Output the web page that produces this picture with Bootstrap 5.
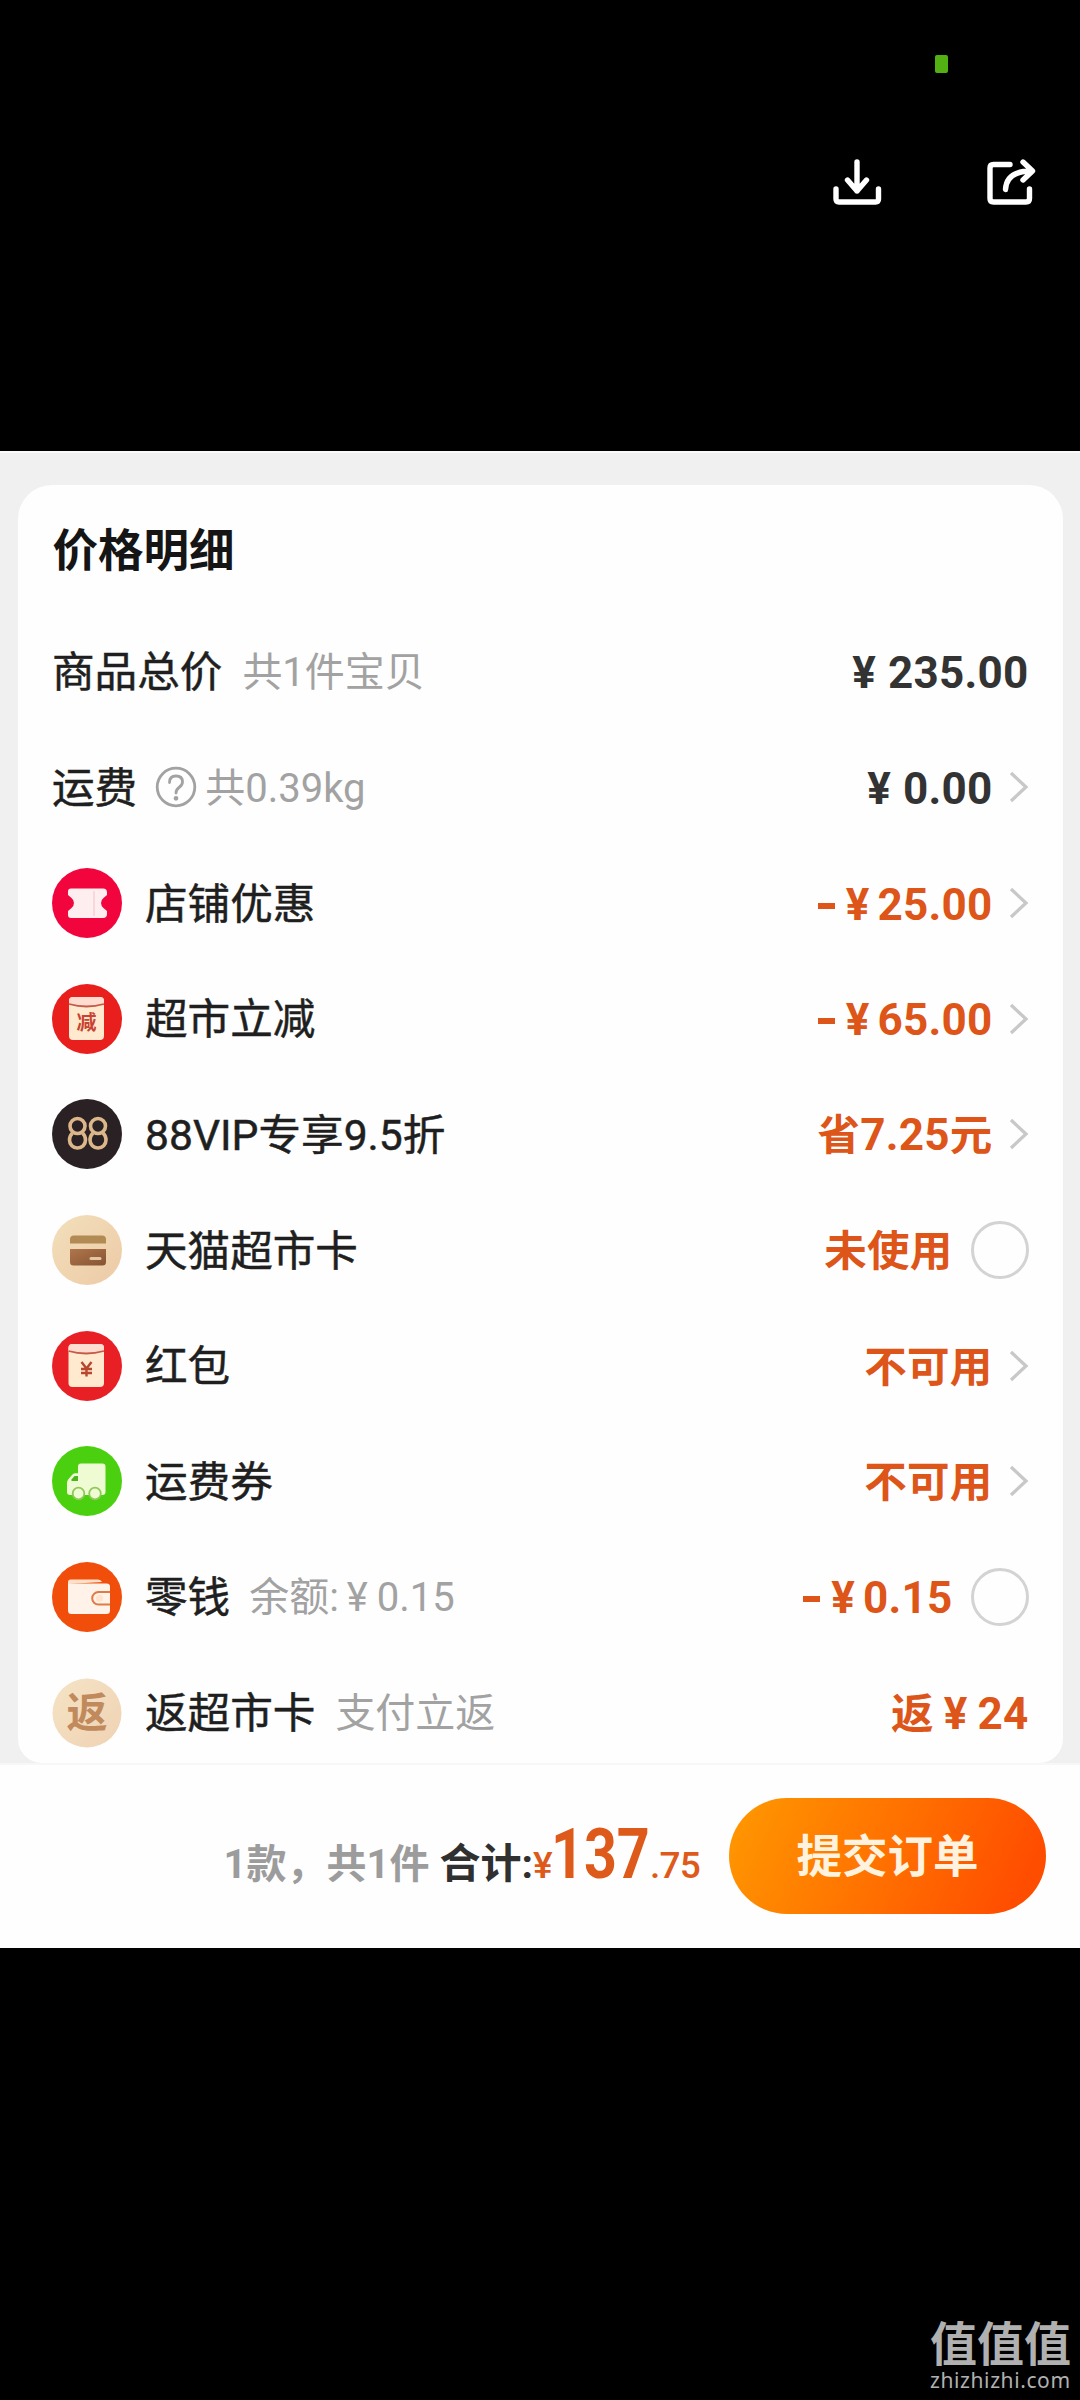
<!DOCTYPE html>
<html lang="zh-CN">
<head>
<meta charset="utf-8">
<meta name="viewport" content="width=device-width, initial-scale=1">
<title>价格明细</title>
<link href="https://cdn.jsdelivr.net/npm/bootstrap@5.3.0/dist/css/bootstrap.min.css" rel="stylesheet">
<style>
html,body{background:#000}
body{width:1080px;height:2400px;overflow:hidden;font-family:Roboto,"Noto Sans CJK SC",sans-serif;color:#1f1f1f}
.topbar{height:451px}
.status-dot{width:13px;height:18px;margin:55px 132px 0 auto;background:#52b012;border-radius:2px}
.tools{margin-top:84px;padding-right:43px;gap:102px}
.panel{height:1497px;background:#f0f0f0;border-top:2px solid #fafafa}
.price-card{margin:32px 17.5px 0;height:1278px;border-radius:34px 34px 24px 24px;background:#fefefe}
.price-title{height:129px;padding:5px 0 0 35px;font-size:45.5px;font-weight:700;color:#151515}
.line{height:115.65px;padding:0 34px 0 34.5px;font-size:42.6px;line-height:60px;white-space:nowrap}
.line svg{flex:none}
.line>span:not(.ring){padding-top:3px}
.line>span.name{padding-top:1px}
.name{-webkit-text-stroke:.5px #1f1f1f}
.ico{width:70px;height:70px;margin-right:23px}
.hint{font-size:40px;color:#a2a2a2}
.val{font-weight:700;font-size:44px;color:#333;letter-spacing:.25px}
.val .cn{font-size:42.5px}
.hot{color:#dd5519}
.yen{margin-right:12px}
.hot .yen{margin-right:8px}
.dash{display:inline-block;width:17px;height:6px;background:#dd5519;vertical-align:11px;margin-right:11px}
.chev{margin-left:16px}
.ring{width:58px;height:58px;border:3px solid #d3d3d3;border-radius:50%;margin-left:18px}
.paybar{height:185px;background:#fefefe;border-top:2px solid #f7f7f7;white-space:nowrap;padding-right:34px}
.sum{font-size:40px;font-weight:700;line-height:80px;color:#9c9c9c;margin-right:29px;margin-top:11px}
.sum .lbl{color:#303030;font-size:41px;margin-left:10px;margin-right:-2px}
.sum .money{color:#dd5a1b;font-weight:500;font-size:37px}
.sum .money .frac{letter-spacing:-.8px}
.sum .money .cur{display:inline-block;width:18px;margin-left:2px;letter-spacing:-3px}
.sum .big{font-size:70px;font-weight:700;display:inline-block;line-height:70px;width:99px}
.sum .big i{display:inline-block;font-style:normal;transform:scaleX(.82);transform-origin:0 50%}
.submit{width:317px;height:116px;margin-top:-2px;background:linear-gradient(115deg,#ff9500 5%,#ff7000 50%,#ff4d00 90%);color:#fff3df;font-size:45.5px;font-weight:700;border:0}
.submit span{display:block;padding-top:5px}
.wm{color:#b0b0b0;right:9px;bottom:8px;width:141px}
.wm .a{font:700 47px/54px "Noto Sans CJK SC",sans-serif;height:54px}
.wm .b{font:400 21px/24px "Noto Sans",sans-serif;letter-spacing:.6px;height:24px}
</style>
</head>
<body class="d-flex flex-column m-0 position-relative">
<header class="topbar">
  <div class="d-flex"><div class="status-dot"></div></div>
  <div class="tools d-flex justify-content-end">
    <svg width="52" height="50" viewBox="831 157 52 50" fill="none" stroke="#fff" stroke-width="5.400" stroke-linecap="round" stroke-linejoin="round"><path d="M857 162v29M847.500 180l9.500 11 9.500-11M836 189v10q0 3 3 3h36.500q3 0 3-3v-10"/></svg>
    <svg width="52" height="50" viewBox="985 157 52 50" fill="none" stroke="#fff" stroke-width="5.400" stroke-linecap="round" stroke-linejoin="round"><path d="M1010 164.500h-16.500q-3.500 0-3.500 3.500v30.500q0 3.500 3.500 3.500h32.500q3.500 0 3.500-3.500v-9.500M1005.500 189.500q1-18.500 26-18.500M1023 162l9.500 9-9.500 9"/></svg>
  </div>
</header>
<main class="panel">
  <section class="price-card overflow-hidden">
    <div class="price-title d-flex align-items-center">价格明细</div>

    <div class="line d-flex align-items-center">
      <span class="name">商品总价</span><span class="hint" style="margin-left:20px">共1件宝贝</span>
      <span class="val ms-auto"><span class="yen">¥</span>235.00</span>
    </div>
    <div class="line d-flex align-items-center">
      <span class="name">运费</span>
      <svg style="margin:0 8px 0 18px" width="42" height="42" viewBox="0 0 42 42" fill="none" stroke="#a2a2a2" stroke-width="2.800" stroke-linecap="round"><circle cx="21" cy="21" r="18.800"/><path d="M14.500 16.500q0-6.500 6.500-6.500t6.500 6q0 3-3.500 5.500-3 2.200-3 5.500"/><circle cx="21" cy="32.300" r="1" fill="#a2a2a2"/></svg>
      <span class="hint">共0.39kg</span>
      <span class="val ms-auto"><span class="yen">¥</span>0.00</span>
      <svg class="chev" width="20" height="32" viewBox="0 0 20 32" fill="none" stroke="#c8c8c8" stroke-width="3.300"><path d="M2 2l15 14-15 14"/></svg>
    </div>
    <div class="line d-flex align-items-center">
      <svg class="ico" viewBox="0 0 70 70"><circle cx="35" cy="35" r="35" fill="#f1053c"/><path d="M19 20.500h32q4 0 4 4v2.500l-3.500 3a6.300 6.300 0 0 0 0 10l3.500 3v3q0 4-4 4H19q-3 0-3-3v-4l3.500-3a6.300 6.300 0 0 0 0-10l-3.500-3v-3.500q0-3 3-3z" fill="#ffeef0"/><path d="M42 23v25" stroke="#f8cfd5" stroke-width="1.500"/></svg>
      <span class="name">店铺优惠</span>
      <span class="val hot ms-auto"><span class="dash"></span><span class="yen">¥</span>25.00</span>
      <svg class="chev" width="20" height="32" viewBox="0 0 20 32" fill="none" stroke="#c8c8c8" stroke-width="3.300"><path d="M2 2l15 14-15 14"/></svg>
    </div>
    <div class="line d-flex align-items-center">
      <svg class="ico" viewBox="0 0 70 70"><circle cx="35" cy="35" r="35" fill="#e91f1e"/><rect x="17" y="13" width="35" height="43" rx="4" fill="#ffe9cf"/><path d="M17 20v-3q0-4 4-4h27q4 0 4 4v3q-17.500 5-35 0z" fill="#ffdcd0"/><path d="M17 20q17.500 5 35 0" fill="none" stroke="#c55a46" stroke-width="1.800"/><text x="34.500" y="46" text-anchor="middle" font-size="20" font-weight="700" fill="#c84331">减</text></svg>
      <span class="name">超市立减</span>
      <span class="val hot ms-auto"><span class="dash"></span><span class="yen">¥</span>65.00</span>
      <svg class="chev" width="20" height="32" viewBox="0 0 20 32" fill="none" stroke="#c8c8c8" stroke-width="3.300"><path d="M2 2l15 14-15 14"/></svg>
    </div>
    <div class="line d-flex align-items-center">
      <svg class="ico" viewBox="0 0 70 70"><circle cx="35" cy="35" r="35" fill="#2a2124"/><g fill="none" stroke="#dcb78a" stroke-width="3.600"><circle cx="25.500" cy="27" r="7.500"/><circle cx="46" cy="27" r="7.500"/><path d="M20.500 34q-3 3-3 7a8 8 0 0 0 16 0q0-4-3-7M41 34q-3 3-3 7a8 8 0 0 0 16 0q0-4-3-7"/></g></svg>
      <span class="name">88VIP专享9.5折</span>
      <span class="val hot ms-auto"><span class="cn">省</span>7.25<span class="cn">元</span></span>
      <svg class="chev" width="20" height="32" viewBox="0 0 20 32" fill="none" stroke="#c8c8c8" stroke-width="3.300"><path d="M2 2l15 14-15 14"/></svg>
    </div>
    <div class="line d-flex align-items-center">
      <svg class="ico" viewBox="0 0 70 70"><defs><linearGradient id="sand" x1="0" y1="0" x2="1" y2="1"><stop offset="0" stop-color="#f3dfbb"/><stop offset="1" stop-color="#edcaa6"/></linearGradient><linearGradient id="brown" x1="0" y1="0" x2="1" y2="1"><stop offset="0" stop-color="#b0764c"/><stop offset="1" stop-color="#865433"/></linearGradient></defs><circle cx="35" cy="35" r="35" fill="url(#sand)"/><path d="M18 28.500v-4q0-4 4-4h28q4 0 4 4v4z" fill="#b28a54"/><path d="M18 34h36v13q0 3.500-3.500 3.500h-29q-3.500 0-3.500-3.500z" fill="url(#brown)"/><path d="M39 43.500h9" stroke="#e6c5a4" stroke-width="3" stroke-linecap="round"/></svg>
      <span class="name">天猫超市卡</span>
      <span class="val hot ms-auto"><span class="cn">未使用</span></span><span class="ring"></span>
    </div>
    <div class="line d-flex align-items-center">
      <svg class="ico" viewBox="0 0 70 70"><circle cx="35" cy="35" r="35" fill="#e91f26"/><rect x="16.500" y="13" width="35.500" height="43" rx="4" fill="#ffe9cf"/><path d="M16.500 20v-3q0-4 4-4h27.500q4 0 4 4v3q-17.500 5-35.500 0z" fill="#ffdcd0"/><path d="M16.500 20q17.500 5 35.500 0" fill="none" stroke="#c55a46" stroke-width="1.800"/><path d="M29.500 31l5 6.500 5-6.500M34.500 37.500v8M29 38h11M29 42h11" fill="none" stroke="#b5482f" stroke-width="2.400"/></svg>
      <span class="name">红包</span>
      <span class="val hot ms-auto"><span class="cn">不可用</span></span>
      <svg class="chev" width="20" height="32" viewBox="0 0 20 32" fill="none" stroke="#c8c8c8" stroke-width="3.300"><path d="M2 2l15 14-15 14"/></svg>
    </div>
    <div class="line d-flex align-items-center">
      <svg class="ico" viewBox="0 0 70 70"><circle cx="35" cy="35" r="35" fill="#4bd00f"/><path d="M26 20.500q0-3 3-3h21.500q3 0 3 3V46q0 3-3 3H18q-3 0-3-3v-9q0-2 1.500-4l4-4.500q1-1.200 3-1.200H26z" fill="#eefbd3"/><path d="M19.500 35v-1.500l3-3.500H26v5z" fill="#4bb51c"/><g fill="#eefbd3" stroke="#8fc95a" stroke-width="1.800"><circle cx="26.500" cy="47.500" r="5.800"/><circle cx="43" cy="47.500" r="5.800"/></g></svg>
      <span class="name">运费券</span>
      <span class="val hot ms-auto"><span class="cn">不可用</span></span>
      <svg class="chev" width="20" height="32" viewBox="0 0 20 32" fill="none" stroke="#c8c8c8" stroke-width="3.300"><path d="M2 2l15 14-15 14"/></svg>
    </div>
    <div class="line d-flex align-items-center">
      <svg class="ico" viewBox="0 0 70 70"><circle cx="35" cy="35" r="35" fill="#f04e0a"/><path d="M16 22v-2q0-2.500 2.500-2.500H46q3 0 4 2.500z" fill="#ffe0c8"/><path d="M16 21.500h38.500q3.500 0 3.500 3V30H46.500a6.300 6.300 0 0 0 0 12.600H58v6q0 3.500-3.500 3.500h-35q-3.500 0-3.500-3.500z" fill="#fff2e8"/><path d="M46.500 30H58v12.600H46.500a6.300 6.300 0 0 1 0-12.600z" fill="#fff2e8"/><path d="M58 42.600H46.500a6.300 6.300 0 0 1 0-12.600H58" fill="none" stroke="#e07b45" stroke-width="2"/><circle cx="47.500" cy="36.300" r="3.500" fill="#ffe3cc"/></svg>
      <span class="name">零钱</span><span class="hint" style="margin-left:19px">余额: <span style="margin:0 9px 0 -2px">¥</span>0.15</span>
      <span class="val hot ms-auto"><span class="dash"></span><span class="yen">¥</span>0.15</span><span class="ring"></span>
    </div>
    <div class="line d-flex align-items-center">
      <svg class="ico" viewBox="0 0 70 70"><circle cx="35" cy="35" r="34.500" fill="url(#sand)" opacity=".85"/><text x="35" y="49" text-anchor="middle" font-size="41" font-weight="600" fill="#c08a5c">返</text></svg>
      <span class="name">返超市卡</span><span class="hint" style="margin-left:20px">支付立返</span>
      <span class="val hot ms-auto"><span class="cn" style="margin-right:10px">返</span><span class="yen" style="margin-right:10px">¥</span>24</span>
    </div>
  </section>
  <footer class="paybar d-flex align-items-center justify-content-end">
    <div class="sum">1款，共1件<span class="lbl">合计:</span><span class="money"><span class="cur">¥</span><span class="big"><i>137</i></span><span class="frac">.75</span></span></div>
    <button class="submit btn rounded-pill p-0"><span>提交订单</span></button>
  </footer>
</main>
<div class="wm position-absolute"><div class="a">值值值</div><div class="b">zhizhizhi.com</div></div>
<script src="https://cdn.jsdelivr.net/npm/bootstrap@5.3.0/dist/js/bootstrap.bundle.min.js"></script>
</body>
</html>
